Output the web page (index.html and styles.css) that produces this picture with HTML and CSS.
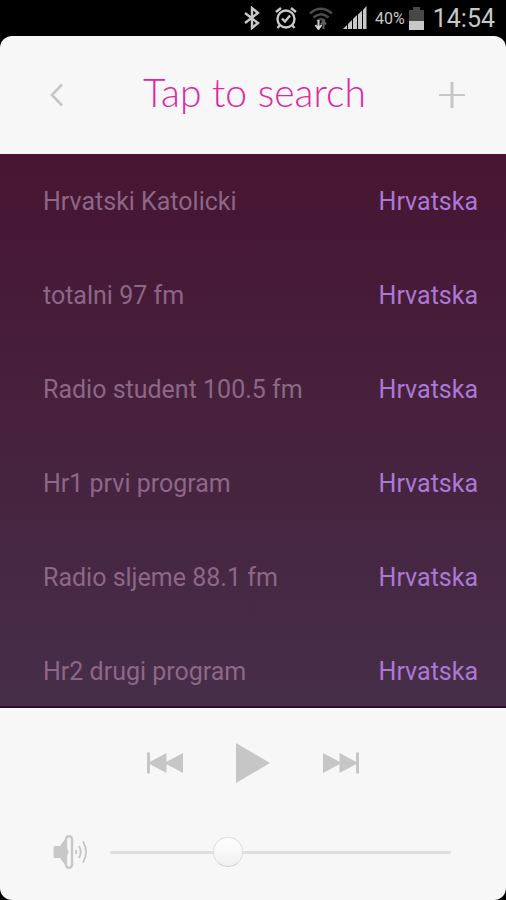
FILE: index.html
```html
<!DOCTYPE html>
<html lang="en">
<head>
<meta charset="utf-8">
<meta name="viewport" content="width=device-width, initial-scale=1">
<title>Radio stations</title>
<link rel="stylesheet" href="styles.css">
</head>
<body>
<div class="status">
  <svg width="18" height="24" viewBox="0 0 18 24" fill="none" stroke="currentColor" stroke-width="2.4"><path d="M2 7l13 10-6 5V2l6 5L2 17"/></svg>
  <svg class="alarm" width="22" height="24" viewBox="0 0 22 24" fill="none" stroke="currentColor" stroke-width="2.4"><circle cx="11" cy="13" r="8.5"/><path d="M7 12.5l3 3 5-6M1 6l5-4M21 6l-5-4M5 19l-2.500 3M17 19l2.500 3"/></svg>
  <svg class="wifi" width="24" height="24" viewBox="0 0 24 24" fill="none"><g stroke="#4c4c4c" stroke-width="2.400"><path d="M1 7.500Q12-2 23 7.500M4.500 11.500Q12 5 19.500 11.500M8 15Q12 11.500 16 15"/></g><path d="M9.500 14v8M6.500 19l3 4 3-4" stroke="#d0d0d0" stroke-width="2"/><path d="M14.500 23v-8M12 18.500l2.500-3.500 2.500 3.500" stroke="#606060" stroke-width="2"/></svg>
  <svg class="signal" width="24" height="24" viewBox="0 0 24 24" fill="currentColor"><path d="M0 23l4-4v4zM5 18l4-4V23H5zM10 13l4-4v14h-4zM15 8.500l4-4V23h-4zM20 4L23.500 0v23h-3.500z"/></svg>
  <span class="percent">40%</span>
  <svg class="battery" width="15" height="23" viewBox="0 0 15 23"><path fill="#484848" d="M4 0h7v3h4v11H0V3h4z"/><path fill="#c8c8c8" d="M0 14h15v9H0z"/></svg>
  <time class="clock">14:54</time>
</div>
<main class="app">
  <header class="header">
    <button class="icon-button" aria-label="Back"><svg width="14" height="24" viewBox="0 0 14 24" fill="none" stroke="currentColor" stroke-width="2.600"><path d="M12 1.500L2 12l10 10.500"/></svg></button>
    <button class="search">Tap to search</button>
    <button class="icon-button" aria-label="Add station"><svg width="26" height="26" viewBox="0 0 26 26" fill="none" stroke="currentColor"><path stroke-width="2" d="M0 13h26"/><path stroke-width="3" d="M13 0v26"/></svg></button>
  </header>
  <ul class="stations">
    <li class="station"><span>Hrvatski Katolicki</span><span class="country">Hrvatska</span></li>
    <li class="station"><span>totalni 97 fm</span><span class="country">Hrvatska</span></li>
    <li class="station"><span>Radio student 100.5 fm</span><span class="country">Hrvatska</span></li>
    <li class="station"><span>Hr1 prvi program</span><span class="country">Hrvatska</span></li>
    <li class="station"><span>Radio sljeme 88.1 fm</span><span class="country">Hrvatska</span></li>
    <li class="station"><span>Hr2 drugi program</span><span class="country">Hrvatska</span></li>
  </ul>
  <footer class="player">
    <div class="controls">
      <button aria-label="Previous"><svg width="36" height="22" viewBox="0 0 36 22" fill="currentColor"><path d="M0 .5h3v9.300L19.500 1v8.800L36 1v20L19.500 12.200V21L3 12.200V21.500H0z"/></svg></button>
      <button aria-label="Play"><svg width="34" height="40" viewBox="0 0 34 40" fill="currentColor"><path d="M0 0l34 20L0 40z"/></svg></button>
      <button aria-label="Next"><svg width="36" height="22" viewBox="0 0 36 22" fill="currentColor"><path d="M36 .5h-3v9.300L16.500 1v8.800L0 1v20l16.500-8.800V21L33 12.200v9.300h3z"/></svg></button>
    </div>
    <div class="volume">
      <label for="volume" aria-label="Volume"><svg width="36" height="36" viewBox="0 0 36 36" fill="none" stroke="currentColor"><path fill="currentColor" stroke="none" d="M3 12H8L15 2.500v31L8 24H3Q1.500 24 1.500 22.500v-9Q1.500 12 3 12z"/><rect x="14" y="2.200" width="6" height="31.600" rx="3" stroke-width="2.400" fill="#f7f7f7"/><path fill="currentColor" stroke="none" d="M14 13.500q5 4.500 0 9z"/><g stroke-width="2"><path d="M23.500 16q1.500 2 0 4M27 12q3.500 6 0 12M31 7.500q6 10.500 0 21"/></g></svg></label>
      <input id="volume" type="range" min="0" max="100" value="33">
    </div>
  </footer>
</main>
</body>
</html>
```
FILE: styles.css
```css
* {
  box-sizing: border-box;
}

body {
  margin: 0;
  height: 100vh;
  display: flex;
  flex-direction: column;
  background: #000;
  font-family: Roboto, "Liberation Sans", sans-serif;
}

button {
  display: flex;
  align-items: center;
  justify-content: center;
  padding: 0;
  border: 0;
  background: none;
  color: #c6c6c6;
  font-family: inherit;
}

.status {
  display: flex;
  flex: none;
  align-items: center;
  justify-content: flex-end;
  height: 36px;
  padding: 0 11px 0 0;
  color: #c8c8c8;
}

.alarm {
  margin-left: 14px;
}

.wifi {
  margin-left: 12px;
}

.signal {
  margin-left: 10px;
}

.percent {
  margin-left: 8px;
  font-size: 16px;
}

.battery {
  margin-left: 4px;
}

.clock {
  margin-left: 9px;
  font-size: 25px;
}

.app {
  display: flex;
  flex: 1;
  flex-direction: column;
  min-height: 0;
  overflow: hidden;
  border-radius: 12px;
  background: #f7f7f7;
}

.header {
  display: flex;
  flex: none;
  align-items: center;
  justify-content: space-between;
  height: 118px;
  padding: 0 30px 0 33px;
}

.icon-button {
  width: 48px;
  height: 48px;
}

.search {
  padding-bottom: 6px;
  color: #dc2a9c;
  font-family: Lato, sans-serif;
  font-size: 39px;
  font-weight: 300;
}

.stations {
  flex: 1;
  min-height: 0;
  margin: 0;
  padding: 0;
  overflow-y: auto;
  scrollbar-width: none;
  list-style: none;
  background: linear-gradient(#471532, #462e49);
  border-bottom: 2px solid #310a35;
}

.station {
  display: flex;
  align-items: center;
  justify-content: space-between;
  height: 94px;
  padding: 0 28px 0 43px;
  color: #8d6787;
  font-size: 25px;
}

.country {
  color: #ac78d6;
}

.player {
  flex: none;
  padding: 33px 0 30px;
  border-top: 2px solid #fff;
}

.controls {
  display: flex;
  align-items: center;
  justify-content: center;
  gap: 53px;
  height: 40px;
}

.volume {
  display: flex;
  align-items: center;
  gap: 22px;
  margin-top: 51px;
  padding: 0 55px 0 52px;
  color: #c8c8c8;
}

.volume label {
  display: flex;
}

.volume input {
  flex: 1;
  min-width: 0;
  height: 32px;
  margin: 0;
  appearance: none;
  background: transparent;
}

.volume input::-webkit-slider-runnable-track {
  height: 3px;
  border-radius: 2px;
  background: #dedede;
}

.volume input::-webkit-slider-thumb {
  appearance: none;
  width: 30px;
  height: 30px;
  margin-top: -14px;
  border: 1px solid #dfdfdf;
  border-bottom-color: #cccccc;
  border-radius: 50%;
  background: linear-gradient(#fff, #f0f0f0);
}
```
